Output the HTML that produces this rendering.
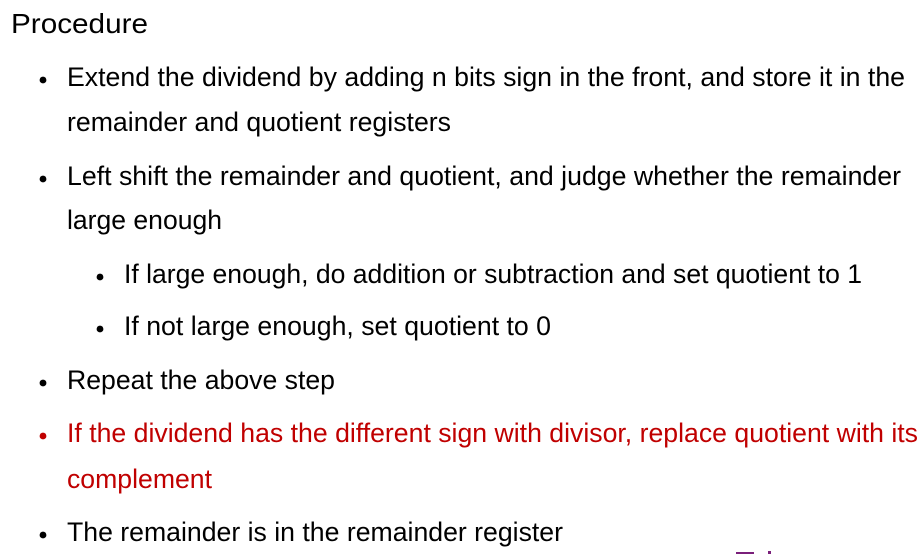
<!DOCTYPE html>
<html><head><meta charset="utf-8"><style>
html,body{margin:0;padding:0;background:#fff;width:921px;height:554px;overflow:hidden}
svg{display:block}
text{font-family:"Liberation Sans",Arial,sans-serif;font-size:26.5px;fill:#000}
.r{fill:#c00000}
</style></head><body>
<svg width="921" height="554" viewBox="0 0 921 554">
<text x="11" y="33" style="font-size:27.5px" textLength="137" lengthAdjust="spacingAndGlyphs">Procedure</text>
<g>
<circle cx="43" cy="80" r="3.4"/>
<text x="67" y="86" textLength="838" lengthAdjust="spacingAndGlyphs">Extend the dividend by adding n bits sign in the front, and store it in the</text>
<text x="67" y="131" textLength="384" lengthAdjust="spacingAndGlyphs">remainder and quotient registers</text>
<circle cx="43" cy="179" r="3.4"/>
<text x="67" y="185" textLength="834" lengthAdjust="spacingAndGlyphs">Left shift the remainder and quotient, and judge whether the remainder</text>
<text x="67" y="229" textLength="155" lengthAdjust="spacingAndGlyphs">large enough</text>
<circle cx="100" cy="277" r="3.4"/>
<text x="124" y="283" textLength="738" lengthAdjust="spacingAndGlyphs">If large enough, do addition or subtraction and set quotient to 1</text>
<circle cx="100" cy="329" r="3.4"/>
<text x="124" y="335" textLength="427" lengthAdjust="spacingAndGlyphs">If not large enough, set quotient to 0</text>
<circle cx="43" cy="383" r="3.4"/>
<text x="67" y="389" textLength="268" lengthAdjust="spacingAndGlyphs">Repeat the above step</text>
<circle cx="43" cy="436" r="3.4" fill="#c00000"/>
<text class="r" x="67" y="442" textLength="851" lengthAdjust="spacingAndGlyphs">If the dividend has the different sign with divisor, replace quotient with its</text>
<text class="r" x="67" y="488" textLength="145" lengthAdjust="spacingAndGlyphs">complement</text>
<circle cx="43" cy="535" r="3.4"/>
<text x="67" y="541" textLength="496" lengthAdjust="spacingAndGlyphs">The remainder is in the remainder register</text>
</g>
<rect x="736" y="552" width="18" height="2" fill="#7a1f7a"/>
<rect x="768" y="551" width="3" height="3" fill="#7a1f7a"/>
</svg>
</body></html>
